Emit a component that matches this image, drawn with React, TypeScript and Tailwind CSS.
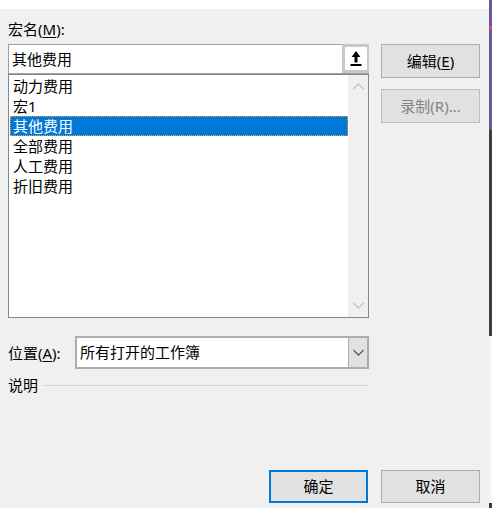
import React from "react";

const font = { fontFamily: '"Noto Sans", "Noto Sans CJK SC", sans-serif' };

function Chevron({ up, color = "#c2c2c2" }: { up?: boolean; color?: string }) {
  return (
    <svg width="11" height="7" viewBox="0 0 11 7">
      <path
        d={up ? "M0.5 6 L5.5 1 L10.5 6" : "M0.5 1 L5.5 6 L10.5 1"}
        fill="none"
        stroke={color}
        strokeWidth="1.3"
      />
    </svg>
  );
}

function Btn({
  children,
  disabled,
  def,
  className = "",
}: {
  children: React.ReactNode;
  disabled?: boolean;
  def?: boolean;
  className?: string;
}) {
  return (
    <div
      className={
        "flex items-center justify-center bg-[#e1e1e1] text-[15px] " +
        (def
          ? "border-2 border-[#0078d7] text-black "
          : disabled
          ? "border border-[#bfbfbf] text-[#838383] "
          : "border border-[#adadad] text-black ") +
        className
      }
    >
      {children}
    </div>
  );
}

export default function App() {
  const items = ["动力费用", "宏1", "其他费用", "全部费用", "人工费用", "折旧费用"];
  return (
    <div className="flex w-[492px] h-[508px] overflow-hidden" style={font}>
      <div className="w-[489px] h-full bg-[#f0f0f0] flex flex-col">
        <div className="h-[9px] bg-white shrink-0" />
        <div className="flex">
          <div className="ml-[8px] w-[361px] flex flex-col">
            <div className="pt-[10px] h-[35px] text-[15px] leading-[20px] text-black">
              宏名(<span className="underline underline-offset-2">M</span>):
            </div>
            <div className="h-[30px] border border-[#a0a0a0] bg-white flex items-center">
              <div className="flex-1 pl-[3px] text-[15px] leading-[20px] text-black">其他费用</div>
              <div className="w-[27px] h-[29px] bg-[#c8c8c8] flex items-center justify-center mr-[-1px] mt-[-1px]">
                <div className="w-[22px] h-[23px] bg-white flex items-center justify-center">
                  <svg width="12" height="16" viewBox="0 0 12 16">
                    <path d="M6 0 L10.5 6 L7.5 6 L7.5 11.5 L4.5 11.5 L4.5 6 L1.5 6 Z" fill="#000" />
                    <rect x="0.5" y="13" width="11" height="2" fill="#000" />
                  </svg>
                </div>
              </div>
            </div>
            <div className="h-[244px] border border-[#828790] bg-white flex">
              <div className="flex-1 pt-[1px] pl-[1px]">
                {items.map((it) =>
                  it === "其他费用" ? (
                    <div
                      key={it}
                      className="h-[20px] leading-[18px] bg-[#0078d7] text-white text-[15px] pl-[2px] border border-dotted border-[#f39c4a]"
                    >
                      {it}
                    </div>
                  ) : (
                    <div key={it} className="h-[20px] leading-[20px] text-black text-[15px] pl-[3px]">
                      {it}
                    </div>
                  )
                )}
              </div>
              <div className="w-[20px] bg-[#f0f0f0] flex flex-col items-center justify-between py-[8px]">
                <Chevron up />
                <Chevron />
              </div>
            </div>
            <div className="mt-[18px] flex items-center h-[33px]">
              <div className="w-[67px] text-[15px] leading-[20px] text-black">
                位置(<span className="underline underline-offset-2">A</span>):
              </div>
              <div className="flex-1 h-[33px] border-2 border-[#adadad] bg-white flex items-stretch">
                <div className="flex-1 pl-[3px] text-[15px] leading-[29px] text-black">所有打开的工作簿</div>
                <div className="w-[19px] bg-[#e1e1e1] border-l border-[#adadad] flex items-center justify-center">
                  <Chevron color="#5a5a5a" />
                </div>
              </div>
            </div>
            <div className="mt-[6px] flex items-center h-[20px]">
              <div className="text-[15px] leading-[20px] text-black">说明</div>
              <div className="flex-1 ml-[5px] h-px bg-[#d5d5d5] mt-[1px]" />
            </div>
          </div>
          <div className="ml-[12px] w-[99px] flex flex-col pt-[35px]">
            <Btn className="h-[34px]">
              编辑(<span className="underline underline-offset-2">E</span>)
            </Btn>
            <Btn disabled className="h-[34px] mt-[11px]">
              录制(R)...
            </Btn>
          </div>
        </div>
        <div className="mt-auto mb-[5px] flex ml-[269px] gap-[13px]">
          <Btn def className="w-[99px] h-[33px]">
            确定
          </Btn>
          <Btn className="w-[99px] h-[33px]">取消</Btn>
        </div>
      </div>
      <div className="w-[3px] h-full flex flex-col">
        <div className="h-[130px] bg-[#6d54a3] relative">
          <div className="absolute top-[26px] left-0 w-[3px] h-[3px] bg-[#d9533a]" />
        </div>
        <div className="h-[206px] bg-[#3f3f3f]" />
        <div className="flex-1 bg-[#f7f7f7]" />
        <div className="h-[5px] bg-[#3a3a3a]" />
      </div>
    </div>
  );
}
